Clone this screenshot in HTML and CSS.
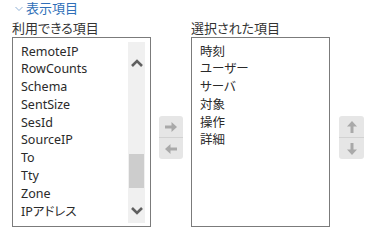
FILE: index.html
```html
<!DOCTYPE html>
<html lang="ja">
<head>
<meta charset="utf-8">
<link rel="stylesheet" href="styles.css">
</head>
<body>
<div class="page">
  <div class="section-head">
    <svg class="chev" width="8" height="6" viewBox="0 0 8 6"><path d="M0.5 1l3.5 3.5L7.5 1" fill="none" stroke="#8fb0d6" stroke-width="1"/></svg>
    <span class="section-title">表示項目</span>
  </div>
  <div class="columns">
    <div class="col">
      <div class="label">利用できる項目</div>
      <div class="listbox">
        <ul class="items">
          <li>RemoteIP</li>
          <li>RowCounts</li>
          <li>Schema</li>
          <li>SentSize</li>
          <li>SesId</li>
          <li>SourceIP</li>
          <li>To</li>
          <li>Tty</li>
          <li>Zone</li>
          <li>IPアドレス</li>
        </ul>
        <div class="scrollbar">
          <svg class="sb-arrow up" width="12" height="8" viewBox="0 0 12 8"><path d="M1 7l5-5 5 5" fill="none" stroke="#606060" stroke-width="2.6"/></svg>
          <div class="sb-space"><div class="thumb"></div></div>
          <svg class="sb-arrow down" width="12" height="8" viewBox="0 0 12 8"><path d="M1 1l5 5 5-5" fill="none" stroke="#606060" stroke-width="2.6"/></svg>
        </div>
      </div>
    </div>
    <div class="btn-group">
      <div class="btn"><svg width="12" height="10" viewBox="0 0 12 10"><path d="M0 3.5h6.5V0L12 5l-5.5 5V6.5H0z" fill="#a9a9a9"/></svg></div>
      <div class="btn"><svg width="12" height="10" viewBox="0 0 12 10"><path d="M12 3.5H5.5V0L0 5l5.5 5V6.5H12z" fill="#a9a9a9"/></svg></div>
    </div>
    <div class="col">
      <div class="label">選択された項目</div>
      <div class="listbox">
        <ul class="items">
          <li>時刻</li>
          <li>ユーザー</li>
          <li>サーバ</li>
          <li>対象</li>
          <li>操作</li>
          <li>詳細</li>
        </ul>
      </div>
    </div>
    <div class="btn-group order">
      <div class="btn"><svg width="10" height="12" viewBox="0 0 10 12"><path d="M3.5 12V5.5H0L5 0l5 5.5H6.5V12z" fill="#a9a9a9"/></svg></div>
      <div class="btn"><svg width="10" height="12" viewBox="0 0 10 12"><path d="M3.5 0v6.5H0L5 12l5-5.5H6.5V0z" fill="#a9a9a9"/></svg></div>
    </div>
  </div>
</div>
</body>
</html>
```

FILE: styles.css
```css
html, body {
  margin: 0;
  padding: 0;
  background: #ffffff;
}
body {
  font-family: "Noto Sans", "Noto Sans CJK JP", sans-serif;
  font-size: 12.5px;
  color: #2a2a2a;
  font-feature-settings: "palt";
}
.page {
  padding-left: 12px;
  width: 364px;
}
.section-head {
  height: 16px;
  display: flex;
  align-items: center;
  padding-left: 3px;
  gap: 3px;
}
.section-title {
  color: #2f6fb8;
  font-size: 13px;
  line-height: 16px;
}
.chev {
  display: block;
  margin-top: 1px;
}
.columns {
  display: flex;
  align-items: flex-start;
}
.col {
  width: 139px;
  display: flex;
  flex-direction: column;
}
.label {
  padding-top: 3px;
  height: 18px;
  line-height: 18px;
  font-size: 13px;
  color: #333333;
}
.listbox {
  box-sizing: border-box;
  height: 190px;
  border: 1px solid #7b7b7b;
  display: flex;
  overflow: hidden;
}
.items {
  list-style: none;
  margin: 0;
  padding: 4.5px 0 0 8px;
  flex: 1;
}
.items li {
  height: 17.8px;
  line-height: 17.8px;
  white-space: nowrap;
}
.scrollbar {
  width: 17px;
  margin: 4px 5px 3px 0;
  background: #f0f0f0;
  display: flex;
  flex-direction: column;
  align-items: center;
}
.sb-arrow {
  display: block;
  flex: none;
}
.sb-arrow.up {
  margin-top: 17px;
}
.sb-arrow.down {
  margin-bottom: 8px;
}
.sb-space {
  flex: 1;
  width: 100%;
  position: relative;
}
.thumb {
  position: absolute;
  left: 1px;
  right: 1px;
  top: 87px;
  height: 34px;
  background: #cdcdcd;
}
.btn-group {
  width: 24px;
  margin: 100px 8px 0 8px;
  background: #e6e6e6;
  border-radius: 3px;
  display: flex;
  flex-direction: column;
}
.btn-group.order {
  width: 25px;
  margin: 100px 0 0 9px;
}
.btn {
  height: 21px;
  display: flex;
  align-items: center;
  justify-content: center;
}
.btn + .btn {
  border-top: 1px solid #d2d2d2;
}
.btn svg {
  display: block;
}
```
